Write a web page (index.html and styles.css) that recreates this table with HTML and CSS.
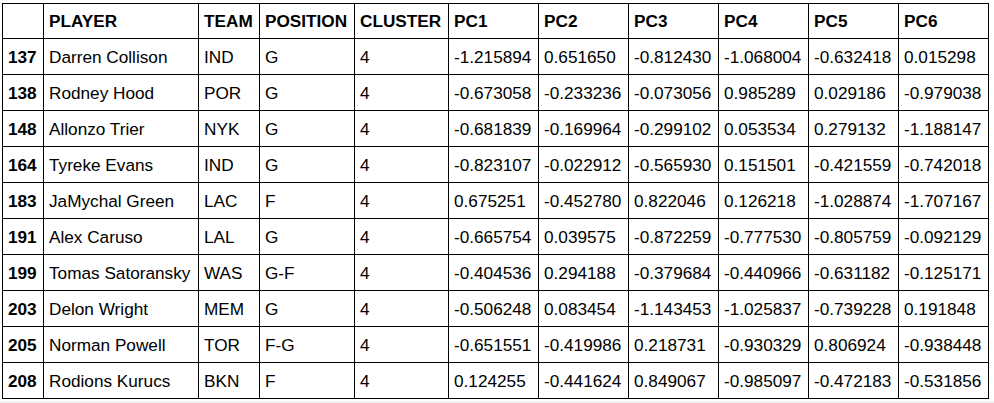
FILE: index.html
```html
<!DOCTYPE html>
<html>
<head>
<meta charset="utf-8">
<link rel="stylesheet" href="styles.css">
</head>
<body>
<div class="page">
<table class="df">
<colgroup>
<col class="c-idx"><col class="c-player"><col class="c-team"><col class="c-pos"><col class="c-cluster">
<col class="c-pc"><col class="c-pc"><col class="c-pc"><col class="c-pc"><col class="c-pc"><col class="c-pc">
</colgroup>
<thead>
<tr class="head"><th></th><th>PLAYER</th><th>TEAM</th><th>POSITION</th><th>CLUSTER</th><th>PC1</th><th>PC2</th><th>PC3</th><th>PC4</th><th>PC5</th><th>PC6</th></tr>
</thead>
<tbody>
<tr><th>137</th><td>Darren Collison</td><td>IND</td><td>G</td><td>4</td><td>-1.215894</td><td>0.651650</td><td>-0.812430</td><td>-1.068004</td><td>-0.632418</td><td>0.015298</td></tr>
<tr><th>138</th><td>Rodney Hood</td><td>POR</td><td>G</td><td>4</td><td>-0.673058</td><td>-0.233236</td><td>-0.073056</td><td>0.985289</td><td>0.029186</td><td>-0.979038</td></tr>
<tr><th>148</th><td>Allonzo Trier</td><td>NYK</td><td>G</td><td>4</td><td>-0.681839</td><td>-0.169964</td><td>-0.299102</td><td>0.053534</td><td>0.279132</td><td>-1.188147</td></tr>
<tr><th>164</th><td>Tyreke Evans</td><td>IND</td><td>G</td><td>4</td><td>-0.823107</td><td>-0.022912</td><td>-0.565930</td><td>0.151501</td><td>-0.421559</td><td>-0.742018</td></tr>
<tr><th>183</th><td>JaMychal Green</td><td>LAC</td><td>F</td><td>4</td><td>0.675251</td><td>-0.452780</td><td>0.822046</td><td>0.126218</td><td>-1.028874</td><td>-1.707167</td></tr>
<tr><th>191</th><td>Alex Caruso</td><td>LAL</td><td>G</td><td>4</td><td>-0.665754</td><td>0.039575</td><td>-0.872259</td><td>-0.777530</td><td>-0.805759</td><td>-0.092129</td></tr>
<tr><th>199</th><td>Tomas Satoransky</td><td>WAS</td><td>G-F</td><td>4</td><td>-0.404536</td><td>0.294188</td><td>-0.379684</td><td>-0.440966</td><td>-0.631182</td><td>-0.125171</td></tr>
<tr><th>203</th><td>Delon Wright</td><td>MEM</td><td>G</td><td>4</td><td>-0.506248</td><td>0.083454</td><td>-1.143453</td><td>-1.025837</td><td>-0.739228</td><td>0.191848</td></tr>
<tr><th>205</th><td>Norman Powell</td><td>TOR</td><td>F-G</td><td>4</td><td>-0.651551</td><td>-0.419986</td><td>0.218731</td><td>-0.930329</td><td>0.806924</td><td>-0.938448</td></tr>
<tr><th>208</th><td>Rodions Kurucs</td><td>BKN</td><td>F</td><td>4</td><td>0.124255</td><td>-0.441624</td><td>0.849067</td><td>-0.985097</td><td>-0.472183</td><td>-0.531856</td></tr>
</tbody>
</table>
</div>
</body>
</html>
```
FILE: styles.css
```css
html, body {
  margin: 0;
  padding: 0;
}
body {
  background: #f1f1f1;
  font-family: "Liberation Sans", Arial, sans-serif;
  color: #000;
}
.page {
  background: #fff;
  height: 401px;
  padding: 3px 0 0 2px;
  box-sizing: border-box;
}
.df {
  border-collapse: collapse;
  table-layout: fixed;
  width: 987px;
  font-size: 17.2px;
}
.c-idx { width: 41px; }
.c-player { width: 155px; }
.c-team { width: 61px; }
.c-pos { width: 95px; }
.c-cluster { width: 94px; }
.c-pc { width: 90px; }
.df th, .df td {
  border: 1px solid #000;
  padding: 0 5px;
  text-align: left;
  vertical-align: middle;
  white-space: nowrap;
  height: 35px;
  line-height: 20px;
}
.df th {
  font-weight: bold;
}
.df .head th {
  height: 34px;
}
```
